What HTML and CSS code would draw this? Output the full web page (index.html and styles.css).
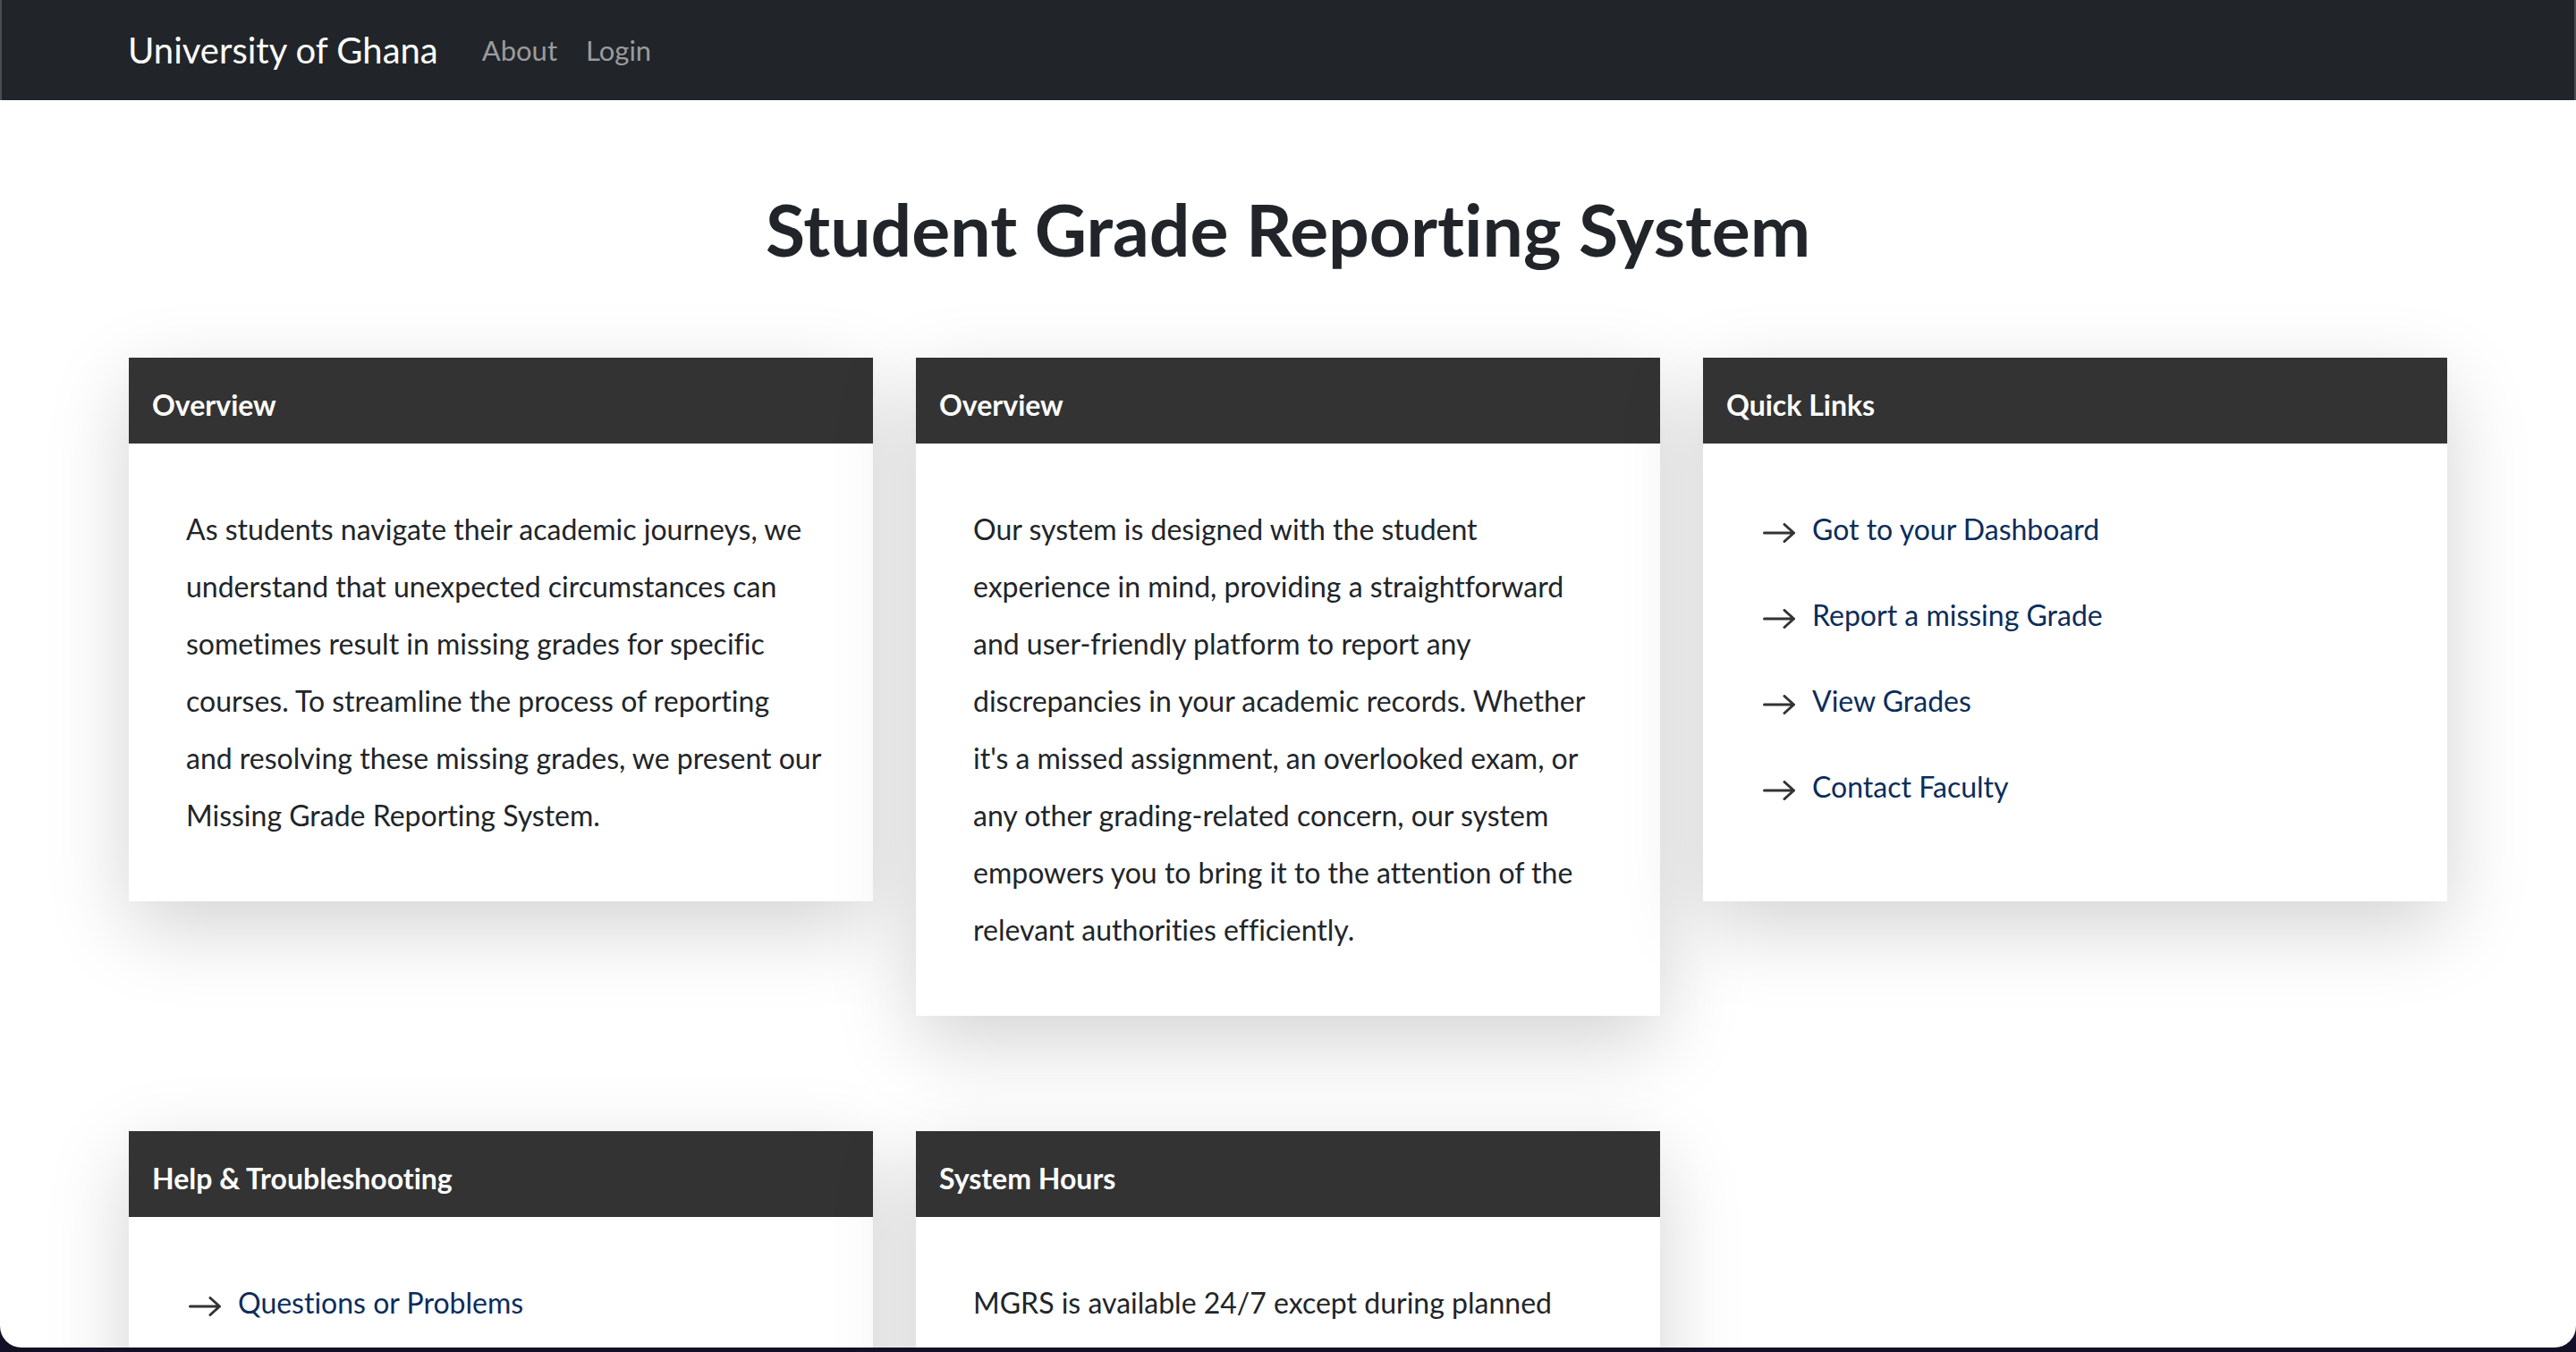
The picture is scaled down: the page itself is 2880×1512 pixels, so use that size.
FILE: index.html
```html
<!DOCTYPE html>
<html lang="en">
<head>
<meta charset="utf-8">
<title>Student Grade Reporting System</title>
<link rel="stylesheet" href="styles.css">
</head>
<body>
<div class="window">
  <nav class="navbar">
    <a class="brand" href="#">University of Ghana</a>
    <a class="nav-link" href="#">About</a>
    <a class="nav-link" href="#">Login</a>
  </nav>
  <main class="main">
    <h1 class="title">Student Grade Reporting System</h1>
    <div class="cards">
      <section class="card">
        <h2 class="card-header">Overview</h2>
        <div class="card-body">
          <p>As students navigate their academic journeys, we understand that unexpected circumstances can sometimes result in missing grades for specific courses. To streamline the process of reporting and resolving these missing grades, we present our Missing Grade Reporting System.</p>
        </div>
      </section>
      <section class="card">
        <h2 class="card-header">Overview</h2>
        <div class="card-body">
          <p>Our system is designed with the student experience in mind, providing a straightforward and user-friendly platform to report any discrepancies in your academic records. Whether it's a missed assignment, an overlooked exam, or any other grading-related concern, our system empowers you to bring it to the attention of the relevant authorities efficiently.</p>
        </div>
      </section>
      <section class="card">
        <h2 class="card-header">Quick Links</h2>
        <div class="card-body">
          <ul class="links">
            <li><svg class="arrow" viewBox="0 0 36 22"><path d="M1.5 11H34.5M24 1.5L34.5 11L24 20.5"/></svg><a href="#">Got to your Dashboard</a></li>
            <li><svg class="arrow" viewBox="0 0 36 22"><path d="M1.5 11H34.5M24 1.5L34.5 11L24 20.5"/></svg><a href="#">Report a missing Grade</a></li>
            <li><svg class="arrow" viewBox="0 0 36 22"><path d="M1.5 11H34.5M24 1.5L34.5 11L24 20.5"/></svg><a href="#">View Grades</a></li>
            <li><svg class="arrow" viewBox="0 0 36 22"><path d="M1.5 11H34.5M24 1.5L34.5 11L24 20.5"/></svg><a href="#">Contact Faculty</a></li>
          </ul>
        </div>
      </section>
      <section class="card">
        <h2 class="card-header">Help &amp; Troubleshooting</h2>
        <div class="card-body">
          <ul class="links">
            <li><svg class="arrow" viewBox="0 0 36 22"><path d="M1.5 11H34.5M24 1.5L34.5 11L24 20.5"/></svg><a href="#">Questions or Problems</a></li>
            <li><svg class="arrow" viewBox="0 0 36 22"><path d="M1.5 11H34.5M24 1.5L34.5 11L24 20.5"/></svg><a href="#">Frequently Asked Questions</a></li>
            <li><svg class="arrow" viewBox="0 0 36 22"><path d="M1.5 11H34.5M24 1.5L34.5 11L24 20.5"/></svg><a href="#">Contact Support</a></li>
          </ul>
        </div>
      </section>
      <section class="card">
        <h2 class="card-header">System Hours</h2>
        <div class="card-body">
          <p>MGRS is available 24/7 except during planned maintenance periods, which are announced in advance.</p>
        </div>
      </section>
    </div>
  </main>
</div>
</body>
</html>
```

FILE: styles.css
```css
html, body {
  margin: 0;
  padding: 0;
}
body {
  background: #120f26;
  font-family: Lato, "Open Sans", "Liberation Sans", sans-serif;
  font-variant-ligatures: no-common-ligatures;
  color: #212529;
}
.window {
  height: 1507px;
  overflow: hidden;
  background: #ffffff;
  border-radius: 0 0 24px 24px;
}
.navbar {
  height: 112px;
  background: #212529;
  display: flex;
  align-items: center;
  padding-left: 143px;
  box-shadow: inset 2px 0 0 #4a4c50, inset -2px 0 0 #4a4c50;
}
.brand {
  color: #ffffff;
  font-size: 40px;
  text-decoration: none;
  margin-right: 33px;
}
.nav-link {
  color: #9a9c9f;
  font-size: 31px;
  text-decoration: none;
  padding: 0 16px;
}
.main {
  width: 2592px;
  margin: 0 auto;
}
.title {
  margin: 0;
  padding: 96px 0;
  text-align: center;
  font-size: 80.5px;
  line-height: 96px;
  font-weight: 700;
  color: #212529;
}
.cards {
  display: grid;
  grid-template-columns: repeat(3, 1fr);
  column-gap: 48px;
  row-gap: 129px;
  align-items: start;
}
.card {
  background: #ffffff;
  box-shadow: 0 29px 86px rgba(0, 0, 0, 0.175);
}
.card-header {
  margin: 0;
  background: #333333;
  color: #ffffff;
  font-size: 32px;
  font-weight: 700;
  line-height: 36px;
  padding: 35px 26px 25px;
}
.card-body {
  padding: 64px 57px 64px 64px;
  font-size: 32px;
  line-height: 64px;
}
.card-body p {
  margin: 0;
}
.links {
  list-style: none;
  margin: 0;
  padding: 0;
}
.links li {
  display: flex;
  align-items: center;
  height: 64px;
  margin-bottom: 32px;
}
.links a {
  color: #0b2d5b;
  text-decoration: none;
}
.arrow {
  width: 36px;
  height: 22px;
  margin: 8px 19px 0 3px;
  flex: none;
  fill: none;
  stroke: #333333;
  stroke-width: 3;
  stroke-linecap: round;
  stroke-linejoin: round;
}
```
